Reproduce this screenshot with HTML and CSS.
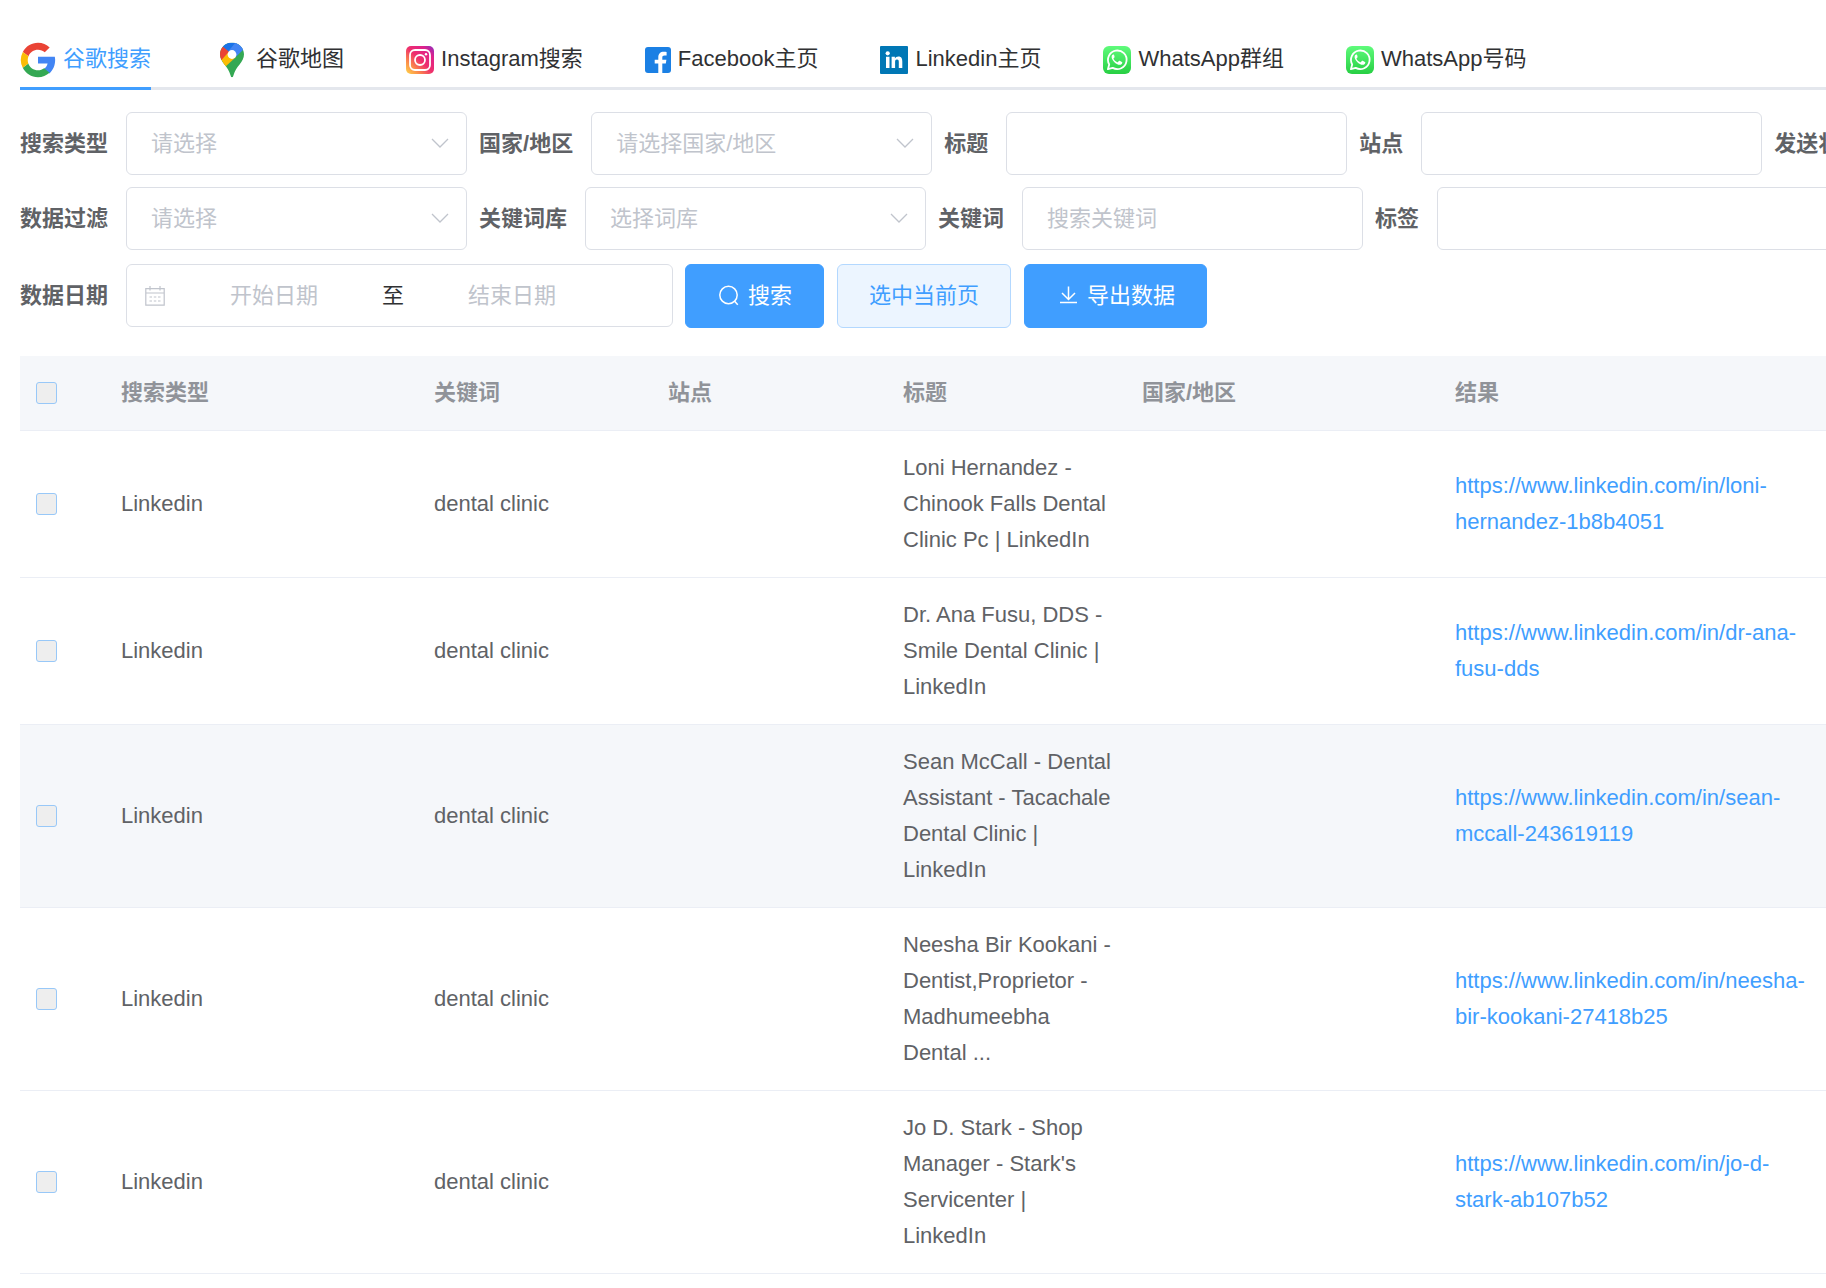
FILE: index.html
```html
<!DOCTYPE html>
<html lang="zh-CN">
<head>
<meta charset="utf-8">
<meta name="viewport" content="width=device-width, initial-scale=1">
<title>谷歌搜索</title>
<link rel="stylesheet" href="styles.css">
</head>
<body>
<svg class="defs" width="0" height="0" aria-hidden="true">
  <defs>
    <linearGradient id="wa-green" x1="0" y1="0" x2="0" y2="1">
      <stop offset="0" stop-color="#5ffb7b"/>
      <stop offset="1" stop-color="#27cf43"/>
    </linearGradient>
    <linearGradient id="ig-base" x1="0" y1="1" x2="1" y2="0">
      <stop offset="0" stop-color="#ffd84a"/>
      <stop offset=".25" stop-color="#fb8a4a"/>
      <stop offset=".5" stop-color="#ee2f6c"/>
      <stop offset=".78" stop-color="#e0218a"/>
      <stop offset="1" stop-color="#8a2fc0"/>
    </linearGradient>
    <clipPath id="pin-shape">
      <path d="M12 0C5.400 0 0 5.300 0 11.800c0 4 1.800 6.900 4.400 10.200 2.600 3.200 4.700 5.900 6.100 10.800.5 1.500.8 2.200 1.500 2.200s1-.7 1.500-2.200c1.400-4.900 3.500-7.600 6.100-10.800C22.200 18.700 24 15.800 24 11.800 24 5.300 18.600 0 12 0z"/>
    </clipPath>
    <symbol id="whatsapp" viewBox="0 0 28 28">
      <rect width="28" height="28" rx="6" fill="url(#wa-green)"/>
      <path d="M4.900 23.200l1.300-4.800a9.300 9.300 0 1 1 3.500 3.500z" fill="none" stroke="#fff" stroke-width="1.800" stroke-linejoin="round"/>
      <path d="M11.200 9.200c-.3-.6-.5-.6-.9-.6-.6 0-1.700.8-1.700 2.500 0 1.600 1.200 3.300 2.600 4.800 1.700 1.800 3.700 2.900 5.400 2.900 1.500 0 2.600-1 2.700-2.100 0-.5 0-.6-.4-.8l-2.200-1.100c-.4-.2-.6-.1-.9.300l-.8 1c-.2.200-.4.300-.8.100-1.600-.7-2.800-1.700-3.600-3.200-.2-.4-.1-.5.100-.8l.7-.8c.2-.3.200-.5.100-.8z" fill="#fff"/>
    </symbol>
    <symbol id="chevron" viewBox="0 0 18 10">
      <path d="M1 1l8 8 8-8" fill="none" stroke="currentColor" stroke-width="1.300"/>
    </symbol>
  </defs>
</svg>

<main class="page">
  <nav class="tabs">
    <a class="tab tab-active" href="#google">
      <svg class="tab-icon" width="36" height="36" viewBox="3 3 42 42" aria-hidden="true">
        <path fill="#4285f4" d="M43.600 20.100H24v7.900h11.200c-.6 3-2.300 5.100-4.400 6.500l6.500 5.200C41.300 36 44 30.600 44 24c0-1.400-.1-2.600-.4-3.900z"/>
        <path fill="#ea4335" d="M6.300 14.700l6.600 4.800C14.700 15.100 19 12 24 12c3.100 0 5.800 1.200 7.900 3l5.700-5.700C34 6.100 29.300 4 24 4 16.300 4 9.700 8.300 6.300 14.700z"/>
        <path fill="#34a853" d="M24 44c5.200 0 9.900-2 13.400-5.200l-6.200-5.200C29.200 35.100 26.700 36 24 36c-5.200 0-9.600-3.300-11.300-8l-6.500 5C9.500 39.600 16.200 44 24 44z"/>
        <path fill="#fbbc05" d="M12.700 28a12.200 12.200 0 0 1 .2-8.500l-6.600-4.800A20 20 0 0 0 6.200 33z"/>
      </svg>
      <span>谷歌搜索</span>
    </a>
    <a class="tab" href="#maps">
      <svg class="tab-icon" width="36" height="36" viewBox="-7 -.5 36 36" aria-hidden="true">
        <g clip-path="url(#pin-shape)">
          <rect width="24" height="35" fill="#34a853"/>
          <path fill="#4285f4" d="M15.500 0H24v6.500L12 18z"/>
          <path fill="#1a73e8" d="M0 0h16L8 10.500 2.700 4.200z"/>
          <path fill="#ea4335" d="M2.700 4L10 10 2 17.500H0V4z"/>
          <path fill="#fbbc04" d="M1.500 17.500L10 8l6 6.500L5 24.500z"/>
          <path fill="#4285f4" d="M15.500 0L8.500 8.500 15 15l8.500-9z"/>
        </g>
        <circle cx="12" cy="12" r="4.400" fill="#fff"/>
      </svg>
      <span>谷歌地图</span>
    </a>
    <a class="tab" href="#instagram">
      <svg class="tab-icon" width="28" height="28" viewBox="0 0 28 28" aria-hidden="true">
        <rect width="28" height="28" rx="5" fill="url(#ig-base)"/>
        <rect x="4" y="4" width="20" height="20" rx="5" fill="none" stroke="#fff" stroke-width="1.800"/>
        <circle cx="14" cy="14" r="5" fill="none" stroke="#fff" stroke-width="1.800"/>
        <circle cx="20" cy="8.200" r="1.200" fill="#fff"/>
      </svg>
      <span>Instagram搜索</span>
    </a>
    <a class="tab" href="#facebook">
      <svg class="tab-icon" width="26" height="26" viewBox="0 0 26 26" aria-hidden="true">
        <rect width="26" height="26" rx="3" fill="#1b80e4"/>
        <path fill="#fff" d="M13.300 26V16.600H9.700v-3.800h3.600v-2.500c0-3.700 2.100-5.600 5.400-5.600 1.200 0 2.300.1 2.900.2v3.500h-2c-1.800 0-2.300.9-2.300 2.100v2.300h4.100l-.6 3.800h-3.500V26z"/>
      </svg>
      <span>Facebook主页</span>
    </a>
    <a class="tab" href="#linkedin">
      <svg class="tab-icon" width="28" height="28" viewBox="0 0 28 28" aria-hidden="true">
        <rect width="28" height="28" rx="1" fill="#0077b5"/>
        <circle cx="7.700" cy="7.300" r="2.100" fill="#fff"/>
        <path fill="#fff" d="M6 10.800h3.500V22H6zM11.600 10.800h3.300v1.600c.6-1.100 1.900-1.900 3.500-1.900 3.200 0 3.900 2.200 3.900 5V22h-3.500v-5.700c0-1.400-.1-2.800-1.800-2.800s-1.900 1.400-1.900 2.700V22h-3.500z"/>
      </svg>
      <span>Linkedin主页</span>
    </a>
    <a class="tab" href="#whatsapp-groups">
      <svg class="tab-icon" width="28" height="28" aria-hidden="true"><use href="#whatsapp"/></svg>
      <span>WhatsApp群组</span>
    </a>
    <a class="tab" href="#whatsapp-numbers">
      <svg class="tab-icon" width="28" height="28" aria-hidden="true"><use href="#whatsapp"/></svg>
      <span>WhatsApp号码</span>
    </a>
  </nav>

  <form class="filters">
    <div class="filter-row">
      <div class="field">
        <label for="type">搜索类型</label>
        <div class="select"><select id="type"><option>请选择</option></select><svg class="chevron" aria-hidden="true"><use href="#chevron"/></svg></div>
      </div>
      <div class="field">
        <label for="country">国家/地区</label>
        <div class="select"><select id="country"><option>请选择国家/地区</option></select><svg class="chevron" aria-hidden="true"><use href="#chevron"/></svg></div>
      </div>
      <div class="field">
        <label for="title">标题</label>
        <input class="control" id="title" type="text">
      </div>
      <div class="field">
        <label for="site">站点</label>
        <input class="control" id="site" type="text">
      </div>
      <div class="field">
        <label for="status">发送状态</label>
        <input class="control" id="status" type="text">
      </div>
    </div>

    <div class="filter-row">
      <div class="field">
        <label for="filter">数据过滤</label>
        <div class="select"><select id="filter"><option>请选择</option></select><svg class="chevron" aria-hidden="true"><use href="#chevron"/></svg></div>
      </div>
      <div class="field">
        <label for="library">关键词库</label>
        <div class="select"><select id="library"><option>选择词库</option></select><svg class="chevron" aria-hidden="true"><use href="#chevron"/></svg></div>
      </div>
      <div class="field">
        <label for="keyword">关键词</label>
        <input class="control" id="keyword" type="text" placeholder="搜索关键词">
      </div>
      <div class="field">
        <label for="tag">标签</label>
        <input class="control control-wide" id="tag" type="text">
      </div>
    </div>

    <div class="filter-row filter-row-actions">
      <div class="field">
        <label for="date-start">数据日期</label>
        <div class="date-range">
          <svg class="calendar" width="20" height="20" viewBox="0 0 20 20" fill="none" stroke="currentColor" stroke-width="1.200" aria-hidden="true">
            <path d="M.8 2.600h18.400v16.600H.8zM.8 7h18.400M5 0v4.500M15 0v4.500"/>
            <path d="M4.500 11h2.500M8.800 11h2.500M13 11h2.500M4.500 15h2.500M8.800 15h2.500M13 15h2.500"/>
          </svg>
          <input id="date-start" type="text" placeholder="开始日期">
          <span class="date-separator">至</span>
          <input type="text" placeholder="结束日期" aria-label="结束日期">
        </div>
      </div>
      <div class="actions">
        <button class="button button-primary" type="button">
          <svg width="22" height="22" viewBox="0 0 22 22" fill="none" stroke="currentColor" stroke-width="1.500" aria-hidden="true"><circle cx="11.500" cy="10" r="8.700"/><path d="M17.400 16l3.400 3.700"/></svg>
          <span>搜索</span>
        </button>
        <button class="button button-plain" type="button">选中当前页</button>
        <button class="button button-primary" type="button">
          <svg width="22" height="22" viewBox="0 0 22 22" fill="none" stroke="currentColor" stroke-width="1.500" aria-hidden="true"><path d="M12.500 1.500v12.500M6 8l6.500 6.500L19 8M4 17.500h17"/></svg>
          <span>导出数据</span>
        </button>
      </div>
    </div>
  </form>

  <div class="table-wrap">
    <table class="results">
      <colgroup>
        <col class="col-check"><col class="col-type"><col class="col-keyword"><col class="col-site"><col class="col-title"><col class="col-country"><col class="col-result">
      </colgroup>
      <thead>
        <tr>
          <th><input type="checkbox" aria-label="全选"></th>
          <th>搜索类型</th>
          <th>关键词</th>
          <th>站点</th>
          <th>标题</th>
          <th>国家/地区</th>
          <th>结果</th>
        </tr>
      </thead>
      <tbody>
        <tr>
          <td><input type="checkbox" aria-label="选择"></td>
          <td>Linkedin</td>
          <td>dental clinic</td>
          <td></td>
          <td>Loni Hernandez - Chinook Falls Dental Clinic Pc | LinkedIn</td>
          <td></td>
          <td><a href="https://www.linkedin.com/in/loni-hernandez-1b8b4051">https://www.linkedin.com/in/loni-hernandez-1b8b4051</a></td>
        </tr>
        <tr>
          <td><input type="checkbox" aria-label="选择"></td>
          <td>Linkedin</td>
          <td>dental clinic</td>
          <td></td>
          <td>Dr. Ana Fusu, DDS - Smile Dental Clinic | LinkedIn</td>
          <td></td>
          <td><a href="https://www.linkedin.com/in/dr-ana-fusu-dds">https://www.linkedin.com/in/dr-ana-fusu-dds</a></td>
        </tr>
        <tr class="row-hover">
          <td><input type="checkbox" aria-label="选择"></td>
          <td>Linkedin</td>
          <td>dental clinic</td>
          <td></td>
          <td>Sean McCall - Dental Assistant - Tacachale Dental Clinic | LinkedIn</td>
          <td></td>
          <td><a href="https://www.linkedin.com/in/sean-mccall-243619119">https://www.linkedin.com/in/sean-mccall-243619119</a></td>
        </tr>
        <tr>
          <td><input type="checkbox" aria-label="选择"></td>
          <td>Linkedin</td>
          <td>dental clinic</td>
          <td></td>
          <td>Neesha Bir Kookani - Dentist,Proprietor - Madhumeebha Dental&nbsp;...</td>
          <td></td>
          <td><a href="https://www.linkedin.com/in/neesha-bir-kookani-27418b25">https://www.linkedin.com/in/neesha-bir-kookani-27418b25</a></td>
        </tr>
        <tr>
          <td><input type="checkbox" aria-label="选择"></td>
          <td>Linkedin</td>
          <td>dental clinic</td>
          <td></td>
          <td>Jo D. Stark - Shop Manager - Stark's Servicenter | LinkedIn</td>
          <td></td>
          <td><a href="https://www.linkedin.com/in/jo-d-stark-ab107b52">https://www.linkedin.com/in/jo-d-stark-ab107b52</a></td>
        </tr>
      </tbody>
    </table>
  </div>
</main>
</body>
</html>
```

FILE: styles.css
```css
* {
  box-sizing: border-box;
}

body {
  margin: 0;
  background: #fff;
  color: #606266;
  font: 22px/36px "Liberation Sans", "Noto Sans CJK SC", sans-serif;
}

.defs {
  display: block;
}

.page {
  padding: 27px 0 0 20px;
  overflow: hidden;
}

/* Tabs */
.tabs {
  display: flex;
  gap: 62px;
  border-bottom: 3px solid #e4e7ed;
}

.tab {
  display: flex;
  align-items: center;
  gap: 7px;
  height: 63px;
  margin-bottom: -3px;
  padding-top: 4px;
  border-bottom: 3px solid transparent;
  color: #303133;
  text-decoration: none;
  white-space: nowrap;
}

.tab-active {
  border-bottom-color: #409eff;
  color: #409eff;
}

.tab-icon {
  flex: none;
  margin-top: 2px;
}

/* Filters */
.filters {
  display: flex;
  flex-direction: column;
  gap: 12px;
  padding: 22px 0 28px;
}

.filter-row {
  display: flex;
  align-items: flex-start;
  gap: 12px;
}

.filter-row-actions {
  margin-top: 2px;
}

.field {
  display: flex;
  flex: none;
  align-items: center;
  gap: 18px;
}

.field label {
  font-weight: 700;
  white-space: nowrap;
}

input,
select,
button {
  font: inherit;
}

.control,
.select select,
.date-range {
  height: 63px;
  border: 1px solid #dcdfe6;
  border-radius: 6px;
  background: #fff;
}

.control,
.select select {
  width: 341px;
  padding: 0 24px;
  color: #606266;
}

.control-wide {
  width: 468px;
}

.select {
  position: relative;
}

.select select {
  display: block;
  appearance: none;
  color: #c0c4cc;
}

.chevron {
  position: absolute;
  top: 26px;
  right: 18px;
  width: 18px;
  height: 10px;
  color: #c0c4cc;
  pointer-events: none;
}

::placeholder {
  color: #c0c4cc;
  opacity: 1;
}

.date-range {
  display: flex;
  align-items: center;
  width: 547px;
  padding-left: 18px;
}

.calendar {
  flex: none;
  margin-right: 6px;
  color: #c0c4cc;
}

.date-range input {
  width: 206px;
  padding: 0;
  border: 0;
  background: none;
  text-align: center;
}

.date-separator {
  width: 32px;
  color: #303133;
  text-align: center;
}

.actions {
  display: flex;
  gap: 13px;
}

.button {
  display: flex;
  align-items: center;
  gap: 9px;
  height: 64px;
  padding: 0 31px;
  border: 1px solid #409eff;
  border-radius: 6px;
  white-space: nowrap;
}

.button-primary {
  background: #409eff;
  color: #fff;
}

.button-plain {
  border-color: #b3d8ff;
  background: #ecf5ff;
  color: #409eff;
}

/* Results */
.table-wrap {
  overflow: hidden;
}

.results {
  width: 1810px;
  min-width: 100%;
  border-collapse: separate;
  border-spacing: 0;
  table-layout: fixed;
}

.col-check { width: 85px; }
.col-type { width: 313px; }
.col-keyword { width: 234px; }
.col-site { width: 235px; }
.col-title { width: 239px; }
.col-country { width: 313px; }
.col-result { width: 391px; }

.results th,
.results td {
  padding: 19px 12px 19px 16px;
  border-bottom: 1px solid #ebeef5;
  text-align: left;
  vertical-align: middle;
}

.results th {
  background: #f5f7fa;
  color: #909399;
  font-weight: 700;
}

.row-hover td {
  background: #f5f7fa;
}

.results a {
  color: #409eff;
  text-decoration: none;
}

.results input {
  display: block;
  appearance: none;
  width: 21px;
  height: 22px;
  margin: 0;
  border: 1px solid #98c8f8;
  border-radius: 3px;
  background: #eee;
}
```
